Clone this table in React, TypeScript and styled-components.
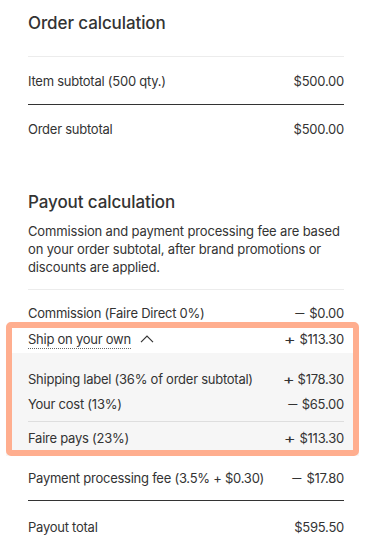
import React, { FC } from "react";
import styled, { createGlobalStyle } from "styled-components";

const GlobalStyle = createGlobalStyle`
  html, body {
    margin: 0;
    padding: 0;
    background: #ffffff;
  }
  body {
    font-family: "Inter", "Noto Sans", sans-serif;
    color: #333333;
    -webkit-font-smoothing: antialiased;
  }
`;

type Line = { label: string; sign?: "+" | "-"; amount: string };

const shipLines: Line[] = [
  { label: "Shipping label (36% of order subtotal)", sign: "+", amount: "$178.30" },
  { label: "Your cost (13%)", sign: "-", amount: "$65.00" },
];

const Amount: FC<{ sign?: "+" | "-"; value: string }> = ({ sign, value }) => (
  <Value>
    {sign && <Sign>{sign === "+" ? "+" : "\u2013"}</Sign>}
    {value}
  </Value>
);

const App: FC = () => {
  return (
    <>
      <GlobalStyle />
      <Page>
        <Title>Order calculation</Title>
        <LightRule />
        <TallRow>
          <span>Item subtotal (500 qty.)</span>
          <Amount value="$500.00" />
        </TallRow>
        <DarkRule />
        <TallRow>
          <span>Order subtotal</span>
          <Amount value="$500.00" />
        </TallRow>

        <PayoutTitle>Payout calculation</PayoutTitle>
        <Note>
          Commission and payment processing fee are based on your order
          subtotal, after brand promotions or discounts are applied.
        </Note>
        <LightRule $gap={13} />
        <Row $top={13}>
          <span>Commission (Faire Direct 0%)</span>
          <Amount sign="-" value="$0.00" />
        </Row>

        <ShipGroup>
          <ShipHeader>
            <Toggle>
              <Dotted>Ship on your own</Dotted>
              <svg width="14" height="8" viewBox="0 0 14 8" fill="none">
                <polyline
                  points="1,7.2 7,1.2 13,7.2"
                  stroke="#333"
                  strokeWidth="1.2"
                />
              </svg>
            </Toggle>
            <Amount sign="+" value="$113.30" />
          </ShipHeader>
          <ShipDetail>
            {shipLines.map((l, i) => (
              <Row key={l.label} $top={i === 0 ? 0 : 5}>
                <span>{l.label}</span>
                <Amount sign={l.sign} value={l.amount} />
              </Row>
            ))}
            <DetailRule />
            <Row>
              <span>Faire pays (23%)</span>
              <Amount sign="+" value="$113.30" />
            </Row>
          </ShipDetail>
        </ShipGroup>

        <Row $top={12}>
          <span>Payment processing fee (3.5% + $0.30)</span>
          <Amount sign="-" value="$17.80" />
        </Row>
        <DarkRule $top={12} />
        <Row $top={16}>
          <span>Payout total</span>
          <Amount value="$595.50" />
        </Row>
      </Page>
    </>
  );
};

export default App;

const Page = styled.div`
  width: 316px;
  padding: 11px 30px 12px 28px;
`;

const Title = styled.h2`
  margin: 0;
  font-size: 17px;
  line-height: 24px;
  font-weight: 500;
  color: #333;
  letter-spacing: -0.1px;
`;

const PayoutTitle = styled(Title)`
  margin-top: 38px;
`;

const Note = styled.p`
  margin: 8px 0 0;
  font-size: 13px;
  line-height: 18px;
  letter-spacing: -0.15px;
  color: #333;
`;

const LightRule = styled.div<{ $gap?: number }>`
  height: 1px;
  background: #ececec;
  margin-top: ${(p) => p.$gap ?? 21}px;
`;

const DarkRule = styled.div<{ $top?: number }>`
  height: 1px;
  background: #333;
  margin-top: ${(p) => p.$top ?? 0}px;
`;

const Row = styled.div<{ $top?: number }>`
  display: flex;
  justify-content: space-between;
  align-items: center;
  font-size: 13px;
  line-height: 20px;
  letter-spacing: -0.25px;
  color: #333;
  margin-top: ${(p) => p.$top ?? 0}px;
  white-space: nowrap;
`;

const TallRow = styled(Row)`
  height: 47px;
`;

const Value = styled.span`
  display: inline-flex;
  align-items: center;
`;

const Sign = styled.span`
  display: inline-block;
  min-width: 9px;
  margin-right: 5px;
  text-align: center;
  transform: scaleX(1.4);
`;

const ShipGroup = styled.div`
  position: relative;
  margin: -1px -15px 0 -22px;

  &::after {
    content: "";
    position: absolute;
    inset: 0;
    border: 6px solid #ffae8f;
    border-radius: 5px;
    pointer-events: none;
  }
`;

const ShipHeader = styled(Row)`
  padding: 7px 15px 4px 22px;
  background: #fff;
`;

const Toggle = styled.span`
  display: inline-flex;
  align-items: center;
  gap: 9px;
`;

const Dotted = styled.span`
  border-bottom: 1px dotted #666;
  line-height: 17px;
  margin-top: 1px;
`;

const ShipDetail = styled.div`
  background: #f6f6f6;
  padding: 16px 15px 8px 22px;
`;

const DetailRule = styled.div`
  height: 1px;
  background: #dedede;
  margin: 7px 0 6px;
`;
